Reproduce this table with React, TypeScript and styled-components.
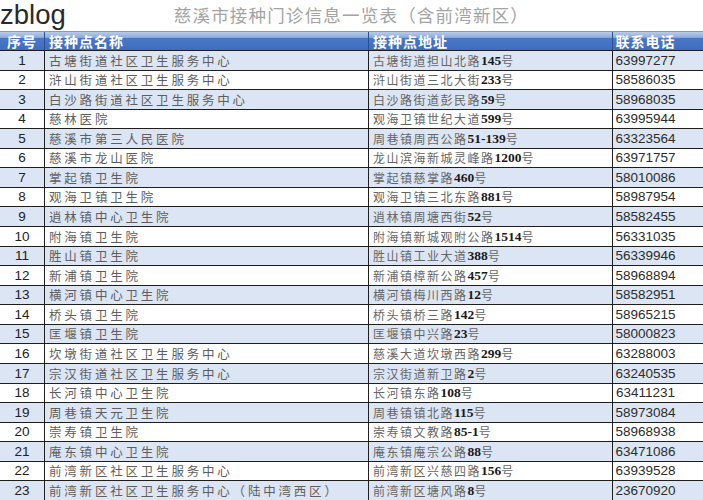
import React from 'react';
import styled, { createGlobalStyle } from 'styled-components';

const GlobalStyle = createGlobalStyle`
  html, body {
    margin: 0;
    padding: 0;
    background: #fff;
    overflow: hidden;
  }
`;

type Clinic = [string, string, string];

const clinics: Clinic[] = [
    ['古塘街道社区卫生服务中心', '古塘街道担山北路145号', '63997277'],
    ['浒山街道社区卫生服务中心', '浒山街道三北大街233号', '58586035'],
    ['白沙路街道社区卫生服务中心', '白沙路街道彭民路59号', '58968035'],
    ['慈林医院', '观海卫镇世纪大道599号', '63995944'],
    ['慈溪市第三人民医院', '周巷镇周西公路51-139号', '63323564'],
    ['慈溪市龙山医院', '龙山滨海新城灵峰路1200号', '63971757'],
    ['掌起镇卫生院', '掌起镇慈掌路460号', '58010086'],
    ['观海卫镇卫生院', '观海卫镇三北东路881号', '58987954'],
    ['逍林镇中心卫生院', '逍林镇周塘西街52号', '58582455'],
    ['附海镇卫生院', '附海镇新城观附公路1514号', '56331035'],
    ['胜山镇卫生院', '胜山镇工业大道388号', '56339946'],
    ['新浦镇卫生院', '新浦镇樟新公路457号', '58968894'],
    ['横河镇中心卫生院', '横河镇梅川西路12号', '58582951'],
    ['桥头镇卫生院', '桥头镇桥三路142号', '58965215'],
    ['匡堰镇卫生院', '匡堰镇中兴路23号', '58000823'],
    ['坎墩街道社区卫生服务中心', '慈溪大道坎墩西路299号', '63288003'],
    ['宗汉街道社区卫生服务中心', '宗汉街道新卫路2号', '63240535'],
    ['长河镇中心卫生院', '长河镇东路108号', '63411231'],
    ['周巷镇天元卫生院', '周巷镇镇北路115号', '58973084'],
    ['崇寿镇卫生院', '崇寿镇文教路85-1号', '58968938'],
    ['庵东镇中心卫生院', '庵东镇庵宗公路88号', '63471086'],
    ['前湾新区社区卫生服务中心', '前湾新区兴慈四路156号', '63939528'],
    ['前湾新区社区卫生服务中心（陆中湾西区）', '前湾新区塘风路8号', '23670920'],
];

const COLS = '44px 324px 244px 1fr';

const Page = styled.div`
  width: 703px;
  height: 500px;
  overflow: hidden;
  display: flex;
  flex-direction: column;
`;

const TopBar = styled.div`
  height: 31px;
  display: flex;
  align-items: flex-start;
`;

const Logo = styled.div`
  font-family: 'Liberation Sans', Arial, sans-serif;
  font-size: 27.5px;
  line-height: 30px;
  color: #2a2a2a;
`;

const Title = styled.div`
  margin-left: 108px;
  margin-top: 4px;
  font-family: 'Noto Sans CJK SC', sans-serif;
  font-size: 17.5px;
  line-height: 22px;
  letter-spacing: 1.2px;
  color: #a3a3a3;
`;

const HeadRow = styled.div`
  display: grid;
  grid-template-columns: ${COLS};
  height: 18px;
  background: linear-gradient(to bottom, #b9cbe9 0%, #8fabdb 30%, #4a77c6 36%, #3f6cc0 100%);
  border-top: 1px solid #7a9bd4;
`;

const HeadCell = styled.div<{ $center?: boolean; $pad?: number; $padRight?: number }>`
  font-family: 'Noto Sans CJK SC', sans-serif;
  font-weight: 700;
  font-size: 14px;
  line-height: 18px;
  color: #fff;
  letter-spacing: 1px;
  text-align: ${(p) => (p.$center ? 'center' : 'left')};
  padding-left: ${(p) => p.$pad ?? 0}px;
  padding-right: ${(p) => p.$padRight ?? 0}px;
  border-left: 1px solid #2c4f8f;
  white-space: nowrap;
  overflow: hidden;
  &:first-child {
    border-left: none;
  }
`;

const Row = styled.div<{ $alt: boolean }>`
  display: grid;
  grid-template-columns: ${COLS};
  height: 19.6px;
  box-sizing: border-box;
  border-top: 1px solid #1e1e1e;
  background: ${(p) => (p.$alt ? '#dbe5f3' : '#ffffff')};
`;

const Cell = styled.div`
  border-left: 1.5px solid #1e1e1e;
  white-space: nowrap;
  overflow: hidden;
  display: flex;
  align-items: flex-end;
  padding-bottom: 1px;
  &:first-child {
    border-left: none;
  }
`;

const Num = styled(Cell)`
  justify-content: center;
  font-family: 'Liberation Sans', Arial, sans-serif;
  font-size: 13.5px;
  color: #222;
  line-height: 17px;
`;

const Name = styled(Cell)`
  padding-left: 4px;
  font-family: 'Noto Sans CJK SC', sans-serif;
  font-size: 12.5px;
  letter-spacing: 2.8px;
  color: #5e5e5e;
  line-height: 17px;
`;

const Address = styled(Cell)`
  padding-left: 4px;
  font-family: 'Noto Sans CJK SC', sans-serif;
  font-size: 12px;
  letter-spacing: 1.5px;
  color: #666;
  line-height: 17px;
`;

const AddrNum = styled.span`
  font-family: 'Liberation Serif', 'Times New Roman', serif;
  font-weight: 700;
  font-size: 13.5px;
  letter-spacing: 0;
  color: #1a1a1a;
`;

const Phone = styled(Cell)`
  justify-content: center;
  padding-right: 25px;
  font-family: 'Liberation Sans', Arial, sans-serif;
  font-size: 13.5px;
  color: #2c2c2c;
  line-height: 17px;
`;

const splitAddress = (addr: string) =>
    addr.split(/([0-9][0-9-]*)/).map((part, i) =>
        /^[0-9]/.test(part) ? <AddrNum key={i}>{part}</AddrNum> : <span key={i}>{part}</span>
    );

const App = () => {
    return (
        <>
            <GlobalStyle />
            <Page>
                <TopBar>
                    <Logo>zblog</Logo>
                    <Title>慈溪市接种门诊信息一览表（含前湾新区）</Title>
                </TopBar>
                <HeadRow>
                    <HeadCell $center>序号</HeadCell>
                    <HeadCell $pad={4}>接种点名称</HeadCell>
                    <HeadCell $pad={4}>接种点地址</HeadCell>
                    <HeadCell $center $padRight={25}>联系电话</HeadCell>
                </HeadRow>
                {clinics.map(([name, addr, phone], i) => (
                    <Row key={i} $alt={i % 2 === 0}>
                        <Num>{i + 1}</Num>
                        <Name>{name}</Name>
                        <Address>{splitAddress(addr)}</Address>
                        <Phone>{phone}</Phone>
                    </Row>
                ))}
            </Page>
        </>
    );
};

export default App;
